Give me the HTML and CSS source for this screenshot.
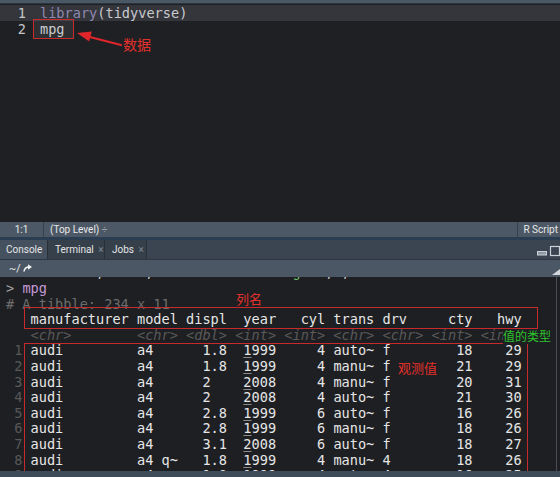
FILE: index.html
```html
<!DOCTYPE html>
<html lang="zh">
<head>
<meta charset="utf-8">
<link rel="stylesheet" href="styles.css">
</head>
<body>
<div class="app">
  <div class="topbar"></div>

  <div class="editor">
    <div class="row active"><div class="ln">1</div><div class="code"><span class="fn">library</span>(tidyverse)</div></div>
    <div class="row"><div class="ln">2</div><div class="code">mpg</div></div>
    <div class="mark mpg-box"></div>
    <svg class="arrow" width="50" height="22" viewBox="0 0 50 22">
      <line x1="47" y1="17" x2="12" y2="8" stroke="#e0262a" stroke-width="2.2" stroke-linecap="round"/>
      <polygon points="3,5 17.8,3.6 15.2,13.6" fill="#e0262a"/>
    </svg>
    <div class="note note-data">数据</div>
  </div>

  <div class="status">
    <div class="pos">1:1</div>
    <div class="scope">(Top Level) <span class="dim">÷</span></div>
    <div class="ftype">R Script</div>
  </div>
  <div class="divider"></div>

  <div class="tabs">
    <div class="tab on t-console">Console</div>
    <div class="tab t-term">Terminal <span class="x">×</span></div>
    <div class="tab t-jobs">Jobs <span class="x">×</span></div>
    <svg class="pane-ctl" width="24" height="12" viewBox="0 0 24 12">
      <rect x="1.5" y="6.5" width="9" height="3.5" fill="#8d98a3" stroke="#c9d0d6" stroke-width="1"/>
      <rect x="14.5" y="1.5" width="9" height="9" fill="none" stroke="#c9d0d6" stroke-width="1.2"/>
    </svg>
  </div>

  <div class="ctoolbar">
    <span class="wd">~/</span>
    <svg class="goto" width="9" height="8" viewBox="0 0 9 8">
      <path d="M1 7.5 C1.5 4 3.5 3 6 3" fill="none" stroke="#f2f2f2" stroke-width="1.6"/>
      <polygon points="5,0.2 9,3 5,5.8" fill="#f2f2f2"/>
    </svg>
    <svg class="scrollup" width="8" height="6" viewBox="0 0 8 6">
      <polygon points="0,6 8,6 8,0" fill="#d0d6dc"/>
    </svg>
  </div>

  <div class="console">
    <div class="out">
      <div class="cl ghost">           ,     ,                 <span class="gg">g</span>   , ,</div>
      <div class="cl"><span class="prompt">&gt;</span> <span class="cmd">mpg</span></div>
      <div class="cl comment"># A tibble: 234 x 11</div>
      <div class="cl">   manufacturer model displ  year   cyl trans drv     cty   hwy</div>
      <div class="cl types">   &lt;chr&gt;        &lt;chr&gt; &lt;dbl&gt; &lt;int&gt; &lt;int&gt; &lt;chr&gt; &lt;chr&gt; &lt;int&gt; &lt;int&gt;</div>
      <div class="cl"><span class="rn"> 1</span> audi         a4      1.8  <u>1</u>999     4 auto~ f        18    29</div>
      <div class="cl"><span class="rn"> 2</span> audi         a4      1.8  <u>1</u>999     4 manu~ f        21    29</div>
      <div class="cl"><span class="rn"> 3</span> audi         a4      2    <u>2</u>008     4 manu~ f        20    31</div>
      <div class="cl"><span class="rn"> 4</span> audi         a4      2    <u>2</u>008     4 auto~ f        21    30</div>
      <div class="cl"><span class="rn"> 5</span> audi         a4      2.8  <u>1</u>999     6 auto~ f        16    26</div>
      <div class="cl"><span class="rn"> 6</span> audi         a4      2.8  <u>1</u>999     6 manu~ f        18    26</div>
      <div class="cl"><span class="rn"> 7</span> audi         a4      3.1  <u>2</u>008     6 auto~ f        18    27</div>
      <div class="cl"><span class="rn"> 8</span> audi         a4 q~   1.8  <u>1</u>999     4 manu~ 4        18    26</div>
      <div class="cl"><span class="rn"> 9</span> audi         a4 q~   1.8  <u>1</u>999     4 auto~ 4        16    25</div>
    </div>
    <div class="vscroll"></div>
    <div class="mark box-head"></div>
    <div class="mark box-rows"></div>
    <div class="note note-cols">列名</div>
    <div class="note note-types">值的类型</div>
    <div class="note note-obs">观测值</div>
  </div>

  <div class="hscroll"></div>
</div>
</body>
</html>
```

FILE: styles.css
```css
* { box-sizing: border-box; }
html, body { margin: 0; padding: 0; background: #1e1f22; }
body {
  width: 560px;
  height: 477px;
  overflow: hidden;
  font-family: "Noto Sans", "Open Sans", sans-serif;
}
.app { display: flex; flex-direction: column; height: 477px; }

.topbar { height: 4px; background: #4a5866; border-bottom: 1px solid #2c3641; }

/* editor */
.editor {
  position: relative;
  height: 218px;
  background: #1f2023;
  padding-top: 1px;
  font-family: "DejaVu Sans Mono", monospace;
  font-size: 13.6px;
}
.row { display: flex; height: 16px; line-height: 16px; }
.row.active { background: #34363c; }
.ln { width: 36px; text-align: right; padding-right: 10px; color: #c6c6c6; }
.code { padding-left: 4px; color: #c9c9ce; white-space: pre; }
.fn { color: #9088b2; }

.mark { position: absolute; border: 1.5px solid #c62a2c; }
.mpg-box { left: 33px; top: 15px; width: 41px; height: 20px; background: rgba(255,255,255,0.07); }
.arrow { position: absolute; left: 74px; top: 24px; }
.note {
  position: absolute;
  font-family: "Noto Sans CJK SC", sans-serif;
  line-height: 1;
  color: #e4302c;
}
.note-data { left: 123px; top: 33px; font-size: 14px; }

/* status bar */
.status {
  height: 15px;
  display: flex;
  background: #4c5865;
  color: #e8e8e8;
  font-family: Roboto, "Noto Sans", sans-serif;
  font-size: 10px;
  line-height: 15px;
}
.pos { width: 44px; text-align: center; border-right: 1px solid #37414c; }
.scope { flex: 1; padding-left: 6px; }
.dim { color: #9aa3ac; }
.ftype { padding: 0 2px 0 5px; border-left: 1px solid #37414c; }
.divider { height: 3px; background: #2b3e51; }

/* tabs */
.tabs {
  height: 20px;
  display: flex;
  align-items: stretch;
  background: #3a4551;
  border-bottom: 1px solid #2d3742;
}
.tab {
  padding-left: 7px;
  font-family: Roboto, "Noto Sans", sans-serif;
  font-size: 10px;
  line-height: 19px;
  color: #e6e6e6;
  background: #35404b;
  border-right: 1px solid #28313a;
  white-space: nowrap;
  overflow: hidden;
}
.tab.on { background: #45515e; }
.t-console { width: 48px; padding-left: 6px; }
.t-term { width: 57px; }
.t-jobs { width: 42px; }
.x { color: #7f8994; margin-left: 2px; }
.pane-ctl { margin-left: auto; align-self: flex-end; margin-bottom: 2px; }

/* console toolbar */
.ctoolbar {
  height: 17px;
  display: flex;
  align-items: center;
  background: #4b5764;
  padding-left: 9px;
  color: #f0f0f0;
  font-family: Roboto, "Noto Sans", sans-serif;
  font-size: 10.5px;
}
.wd { line-height: 17px; }
.goto { margin-left: 3px; margin-bottom: 2px; }
.scrollup { margin-left: auto; align-self: flex-end; margin-bottom: 2px; }

/* console */
.console {
  flex: 1;
  position: relative;
  display: flex;
  overflow: hidden;
  background: #1e1f22;
}
.out {
  flex: 1;
  padding-left: 6px;
  font-family: "DejaVu Sans Mono", monospace;
  font-size: 13.6px;
  line-height: 15.6px;
  color: #e6e6e6;
}
.cl { white-space: pre; height: 15.6px; }
.ghost { margin-top: -11.6px; color: #d0d0d0; }
.gg { color: #6fbf6a; }
.prompt { color: #a6a6a6; }
.cmd { color: #c59ad6; }
.comment { color: #6c6c6c; }
.types { color: #595959; font-style: italic; }
.rn { color: #585858; }
u { text-decoration-color: #8a8a8a; text-underline-offset: 2px; }
.vscroll { width: 4px; border-left: 1px solid #4a4f56; }

.box-head { left: 24px; top: 30px; width: 514px; height: 22px; }
.box-rows { left: 24px; top: 66px; width: 504px; height: 160px; }
.note-cols { left: 236px; top: 15px; font-size: 13px; }
.note-obs { left: 398px; top: 84px; font-size: 13px; }
.note-types {
  left: 503px;
  top: 52px;
  font-size: 12px;
  color: #2cc42c;
  background: #1e1f22;
  padding: 1px 0 2px;
}

.hscroll { height: 6px; background: #3e4b58; }
```
